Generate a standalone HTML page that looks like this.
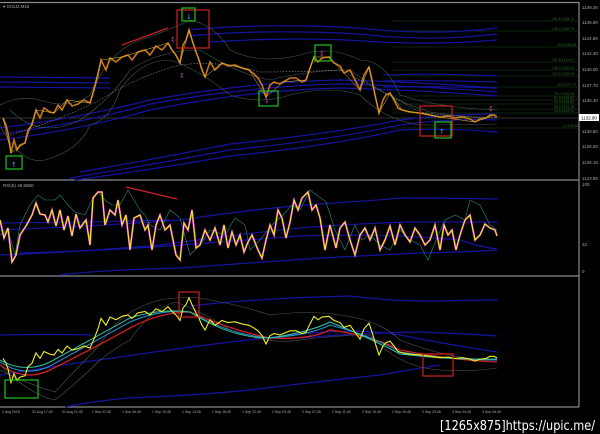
<!DOCTYPE html>
<html><head><meta charset="utf-8"><style>
html,body{margin:0;padding:0;background:#000;width:600px;height:434px;overflow:hidden}
svg{display:block}
.ax{font-family:"Liberation Sans",sans-serif;font-size:4.5px;fill:#aaa}
.fb{font-family:"Liberation Sans",sans-serif;font-size:3.5px;fill:#2a6a2a}
</style></head><body>
<svg width="600" height="434" viewBox="0 0 600 434" xmlns="http://www.w3.org/2000/svg">
<rect width="600" height="434" fill="#000"/>
<g stroke="#8a8a8a" fill="none" stroke-width="1.2">
<line x1="0" y1="2.5" x2="579" y2="2.5"/>
<line x1="579" y1="2" x2="579" y2="407"/>
<line x1="0" y1="180" x2="579" y2="180"/>
<line x1="0" y1="276" x2="579" y2="276"/>
<line x1="0" y1="407" x2="579" y2="407"/>
</g>
<line x1="0" y1="118" x2="579" y2="118" stroke="#666" stroke-width="0.6"/>
<g stroke="#1a4a1a" stroke-width="0.6">
<line x1="392" y1="21" x2="578" y2="21"/><line x1="392" y1="31" x2="578" y2="31"/>
<line x1="392" y1="47" x2="578" y2="47"/><line x1="392" y1="62" x2="578" y2="62"/>
<line x1="392" y1="70" x2="578" y2="70"/><line x1="392" y1="76" x2="578" y2="76"/>
<line x1="392" y1="87" x2="578" y2="87"/><line x1="392" y1="96" x2="578" y2="96"/>
<line x1="392" y1="100" x2="578" y2="100"/><line x1="392" y1="104" x2="578" y2="104"/>
<line x1="392" y1="109" x2="578" y2="109"/><line x1="392" y1="113" x2="578" y2="113"/>
<line x1="392" y1="128" x2="578" y2="128"/>
</g>
<g class="fb">
<text x="552" y="20">261.8 1146.72</text><text x="552" y="30">238.2 1145.79</text>
<text x="557" y="46">200 1143.86</text><text x="552" y="61">161.8 1141.97</text>
<text x="552" y="69">138.2 1140.64</text><text x="552" y="75">127.2 1139.96</text>
<text x="557" y="86">100 1137.77</text><text x="554" y="95">76.4 1136.45</text>
<text x="554" y="99">61.8 1135.59</text><text x="554" y="103">50.0 1134.89</text>
<text x="554" y="108">38.2 1134.18</text><text x="554" y="112">23.6 1133.31</text>
<text x="563" y="127">0 1131.28</text>
</g>
<g class="ax">
<text x="582" y="9">1149.25</text><text x="582" y="24">1146.90</text><text x="582" y="40">1144.60</text>
<text x="582" y="55">1142.30</text><text x="582" y="71">1140.00</text><text x="582" y="87">1137.70</text>
<text x="582" y="102">1135.40</text><text x="582" y="133">1130.80</text><text x="582" y="148">1128.50</text>
<text x="582" y="164">1126.15</text><text x="582" y="180">1123.85</text>
<text x="582" y="186">100</text><text x="582" y="246">32</text><text x="582" y="273">0</text>
<text x="3" y="8">▾ GOLD,M15</text><text x="3" y="187">RSI(5) 46.5960</text>
</g>
<rect x="579" y="114" width="20" height="7" fill="#fff"/>
<text x="581" y="119.5" style="font-family:'Liberation Sans';font-size:4.5px" fill="#000">1132.90</text>
<g class="ax" style="font-size:3.5px">
<text x="2" y="413">1 Aug 2015</text><text x="32" y="413">31 Aug 17:45</text><text x="62" y="413">31 Aug 21:45</text>
<text x="92" y="413">1 Sep 02:45</text><text x="122" y="413">1 Sep 06:45</text><text x="152" y="413">1 Sep 10:45</text>
<text x="182" y="413">1 Sep 14:45</text><text x="212" y="413">1 Sep 18:45</text><text x="242" y="413">1 Sep 22:45</text>
<text x="272" y="413">2 Sep 03:45</text><text x="302" y="413">2 Sep 07:45</text><text x="332" y="413">2 Sep 11:45</text>
<text x="362" y="413">2 Sep 15:45</text><text x="392" y="413">2 Sep 19:45</text><text x="422" y="413">2 Sep 23:45</text>
<text x="452" y="413">3 Sep 04:45</text><text x="482" y="413">3 Sep 08:45</text>
</g>

<g fill="none" stroke="#1414a0" stroke-width="1.2">
<path d="M0 77 L110 78"/><path d="M0 82 L110 83"/><path d="M0 87 L110 88"/>
<path d="M383 75 Q440 73 497 76"/><path d="M383 81 Q440 80 497 82"/><path d="M383 87 Q440 86 497 88"/>
<path d="M188 30 Q240 25 300 26 Q340 26 380 30 Q440 35 497 28"/>
<path d="M188 36 Q240 31 300 32 Q340 32 380 36 Q440 41 497 34"/>
<path d="M210 42 Q300 36 380 42 Q440 45 497 40"/>
<path d="M0 140 Q80 130 150 110 Q250 90 340 88 Q420 90 497 96"/>
<path d="M0 134 Q80 124 150 104 Q250 86 340 84 Q420 86 497 92"/>
<path d="M0 128 Q80 118 150 100 Q250 82 340 80 Q420 82 497 88"/>
<path d="M70 178 Q150 165 230 150 Q330 140 400 125 Q450 118 497 120"/>
<path d="M80 172 Q150 160 230 144 Q330 134 400 120 Q450 114 497 114"/>
<path d="M75 180 Q150 170 230 156 Q330 146 400 130 Q450 128 497 132"/>
</g>
<g fill="none" stroke="#3f5a5a" stroke-width="0.6">
<path d="M0 105 Q20 95 40 100 Q70 110 90 95 Q110 50 140 40 Q170 30 190 20 Q215 25 230 50 Q260 65 300 55 Q330 45 360 60 Q385 60 400 95 Q440 108 497 110"/>
<path d="M0 125 Q20 165 45 160 Q80 150 90 125 Q110 120 120 90 Q140 60 170 60 Q200 70 230 95 Q260 105 290 95 Q330 85 360 95 Q385 120 420 125 Q460 125 497 124"/>
<path d="M10 110 Q40 140 80 120 Q110 100 130 70 Q160 50 200 50 Q240 75 270 80 Q310 70 350 70 Q390 100 430 112 Q470 118 497 118"/>
</g>
<path d="M10 135 Q60 120 100 100 Q140 75 180 65 Q220 60 260 72 Q300 72 340 70 Q380 90 420 112 Q460 118 497 117" fill="none" stroke="#bbb" stroke-width="0.5" stroke-dasharray="1.5,1.5"/>
<polyline fill="none" stroke="#c87818" stroke-width="1.6" points="3,118 6,125 8,133 11,153 14,140 17,150 20,145 25,143 28,130 32,125 36,110 40,118 44,108 50,112 54,113 58,105 62,110 67,100 72,106 78,104 84,100 90,103 94,90 98,75 101,60 106,70 110,58 116,62 122,57 128,55 132,60 138,52 145,50 150,55 156,46 162,50 168,43 172,50 176,55 180,63 183,45 186,40 189,30 192,40 196,52 199,60 202,70 205,77 210,62 215,70 222,63 228,66 235,65 242,68 249,70 254,74 258,78 262,85 266,97 270,85 274,82 280,84 283,82 290,78 296,78 302,82 306,80 310,68 314,57 318,62 322,58 329,57 334,63 340,66 344,73 350,70 355,80 360,90 364,75 369,67 372,80 375,95 379,113 383,100 386,95 390,93 394,100 398,108 402,110 410,112 420,113 430,115 440,117 448,116 455,118 462,117 470,119 475,122 480,119 486,118 490,115 494,115 497,117"/>
<polyline fill="none" stroke="#e8c030" stroke-width="0.5" points="3,118 11,153 25,143 36,110 54,113 67,100 90,103 101,60 122,57 145,50 168,43 180,63 189,30 199,60 205,77 222,63 249,70 266,97 283,82 306,80 314,57 329,57 344,73 360,90 369,67 379,113 390,93 402,110 440,117 475,122 494,115"/>
<g fill="none" stroke-width="1.2">
<rect x="177" y="10" width="32" height="38" stroke="#d02020"/>
<rect x="182" y="8" width="13" height="13" stroke="#20c020"/>
<rect x="6" y="156" width="16" height="13" stroke="#20c020"/>
<rect x="259" y="91" width="19" height="15" stroke="#20c020"/>
<rect x="315" y="45" width="16" height="16" stroke="#20c020"/>
<rect x="420" y="106" width="32" height="30" stroke="#d02020"/>
<rect x="435" y="122" width="16" height="16" stroke="#20c020"/>
<line x1="122" y1="45" x2="168" y2="28" stroke="#d02020"/>
</g>
<g fill="#4aa0ff" font-size="7" font-family="DejaVu Sans"><text x="186" y="19">↓</text><text x="11" y="167">↑</text><text x="439" y="134">↑</text></g>
<g fill="#b040b0" font-size="7" font-family="DejaVu Sans"><text x="264" y="103">↓</text><text x="319" y="56">↕</text><text x="488" y="111">↕</text><text x="179" y="78">↕</text><text x="170" y="42">↕</text></g>

<g fill="none" stroke="#1414a0" stroke-width="1.2">
<path d="M0 230 Q100 226 180 220 Q260 208 320 204 Q380 200 400 198 Q450 198 497 199"/>
<path d="M0 223 Q100 222 170 220"/>
<path d="M0 255 Q80 252 160 245 Q230 235 300 228 Q380 222 420 222 Q470 222 497 222"/>
<path d="M20 253 Q120 250 180 245 Q250 240 300 236 Q380 233 460 240 Q480 247 497 249"/>
<path d="M60 275 Q100 270 180 268 Q260 262 320 258 Q380 255 420 253 Q470 252 497 250"/>
</g>
<polyline fill="none" stroke="#2a8a8a" stroke-width="0.6" points="0,235 8,230 15,255 20,225 30,205 38,195 45,200 55,200 60,195 68,205 75,212 85,215 92,200 98,192 105,200 112,205 120,205 128,190 134,200 140,210 145,215 150,225 160,230 170,210 180,218 190,255 200,245 210,230 225,235 235,218 245,225 250,250 260,240 272,225 283,215 292,205 300,210 310,190 318,196 326,202 335,230 345,250 355,225 362,240 370,235 380,245 390,250 400,230 410,240 420,245 428,260 436,240 445,220 455,215 465,220 470,200 480,205 490,225 497,230"/>
<polyline fill="none" stroke="#c020c0" stroke-width="2" points="0,220 4,238 8,228 12,262 16,255 20,235 26,226 32,215 36,203 40,214 45,215 48,222 52,210 56,226 60,210 64,230 68,216 72,236 76,214 80,228 86,220 90,245 93,198 98,192 102,192 105,225 110,210 115,215 118,200 122,225 126,215 130,250 134,218 140,215 145,230 148,225 152,250 156,225 160,215 165,230 170,225 176,255 180,260 184,223 188,230 192,210 196,248 200,245 205,230 210,240 215,228 220,245 224,225 228,248 232,232 236,245 240,235 244,252 248,242 252,235 258,250 262,258 266,240 270,225 274,235 278,210 282,218 286,238 290,222 294,200 298,210 302,198 308,192 312,210 316,205 320,218 325,250 330,225 336,248 340,228 345,222 350,240 355,255 360,235 365,228 370,240 375,228 380,250 385,240 390,226 395,245 400,225 405,235 410,242 415,228 420,235 425,245 430,240 435,225 440,250 444,225 448,235 452,230 456,250 460,235 465,220 470,215 475,240 480,235 485,224 490,228 495,230 497,236"/>
<polyline fill="none" stroke="#f0f020" stroke-width="1.1" points="0,220 4,238 8,228 12,262 16,255 20,235 26,226 32,215 36,203 40,214 45,215 48,222 52,210 56,226 60,210 64,230 68,216 72,236 76,214 80,228 86,220 90,245 93,198 98,192 102,192 105,225 110,210 115,215 118,200 122,225 126,215 130,250 134,218 140,215 145,230 148,225 152,250 156,225 160,215 165,230 170,225 176,255 180,260 184,223 188,230 192,210 196,248 200,245 205,230 210,240 215,228 220,245 224,225 228,248 232,232 236,245 240,235 244,252 248,242 252,235 258,250 262,258 266,240 270,225 274,235 278,210 282,218 286,238 290,222 294,200 298,210 302,198 308,192 312,210 316,205 320,218 325,250 330,225 336,248 340,228 345,222 350,240 355,255 360,235 365,228 370,240 375,228 380,250 385,240 390,226 395,245 400,225 405,235 410,242 415,228 420,235 425,245 430,240 435,225 440,250 444,225 448,235 452,230 456,250 460,235 465,220 470,215 475,240 480,235 485,224 490,228 495,230 497,236"/>
<line x1="126" y1="187" x2="177" y2="199" stroke="#d02020" stroke-width="1.2"/>

<g fill="none" stroke="#1414a0" stroke-width="1.2">
<path d="M190 306 Q260 298 350 296 Q400 302 440 301 Q470 300 497 300"/>
<path d="M0 335 Q50 334 92 335"/>
<path d="M300 338 Q360 333 420 332 Q470 334 497 336"/>
<path d="M0 375 Q60 365 120 357 Q200 345 300 334 Q360 328 400 335 Q450 345 497 352"/>
<path d="M65 407 Q110 398 150 397 Q200 395 250 390 Q330 380 380 375 Q420 368 440 365"/>
</g>
<g fill="none" stroke="#555" stroke-width="0.6">
<path d="M0 370 Q30 385 55 392 Q80 365 100 345 Q120 310 160 300 Q190 295 210 300 Q240 305 270 315 Q310 310 340 315 Q380 320 400 340 Q450 360 497 360"/>
<path d="M0 365 Q30 395 55 400 Q80 380 100 360 Q120 345 130 340 Q150 310 175 302 Q200 310 230 330 Q270 345 300 340 Q340 335 370 335 Q400 368 440 370 Q470 372 497 368"/>
</g>
<g fill="none" stroke-width="1">
<path d="M0 365 Q25 382 50 370 Q90 350 130 328 Q160 312 190 312 Q230 330 270 338 Q310 340 330 330 Q370 335 400 350 Q450 360 497 362" stroke="#d02020" stroke-width="1.3"/>
<path d="M0 362 Q25 378 50 366 Q90 344 130 322 Q160 309 190 312 Q230 335 270 338 Q310 335 330 325 Q370 335 400 352 Q450 360 497 360" stroke="#2a90d0"/>
<path d="M0 360 Q25 374 50 362 Q90 340 130 318 Q160 308 190 312 Q230 338 270 338 Q310 332 330 322 Q370 338 400 354 Q450 360 497 359" stroke="#30c0a0"/>
</g>
<polyline fill="none" stroke="#f0f020" stroke-width="1.1" vector-effect="non-scaling-stroke" transform="matrix(1 0 0 0.69 0 277)" points="3,118 6,125 8,133 11,153 14,140 17,150 20,145 25,143 28,130 32,125 36,110 40,118 44,108 50,112 54,113 58,105 62,110 67,100 72,106 78,104 84,100 90,103 94,90 98,75 101,60 106,70 110,58 116,62 122,57 128,55 132,60 138,52 145,50 150,55 156,46 162,50 168,43 172,50 176,55 180,63 183,45 186,40 189,30 192,40 196,52 199,60 202,70 205,77 210,62 215,70 222,63 228,66 235,65 242,68 249,70 254,74 258,78 262,85 266,97 270,85 274,82 280,84 283,82 290,78 296,78 302,82 306,80 310,68 314,57 318,62 322,58 329,57 334,63 340,66 344,73 350,70 355,80 360,90 364,75 369,67 372,80 375,95 379,113 383,100 386,95 390,93 394,100 398,108 402,110 410,112 420,113 430,115 440,117 448,116 455,118 462,117 470,119 475,122 480,119 486,118 490,115 494,115 497,117"/>
<g fill="none" stroke-width="1.2">
<rect x="179" y="292" width="20" height="25" stroke="#d02020"/>
<rect x="5" y="380" width="33" height="18" stroke="#20c020"/>
<rect x="423" y="354" width="30" height="22" stroke="#d02020"/>
</g>
<text x="440" y="430" font-family="DejaVu Sans Condensed, DejaVu Sans, sans-serif" font-size="13" fill="#fff" textLength="155" lengthAdjust="spacingAndGlyphs">[1265x875]https://upic.me/</text>
</svg>
</body></html>
